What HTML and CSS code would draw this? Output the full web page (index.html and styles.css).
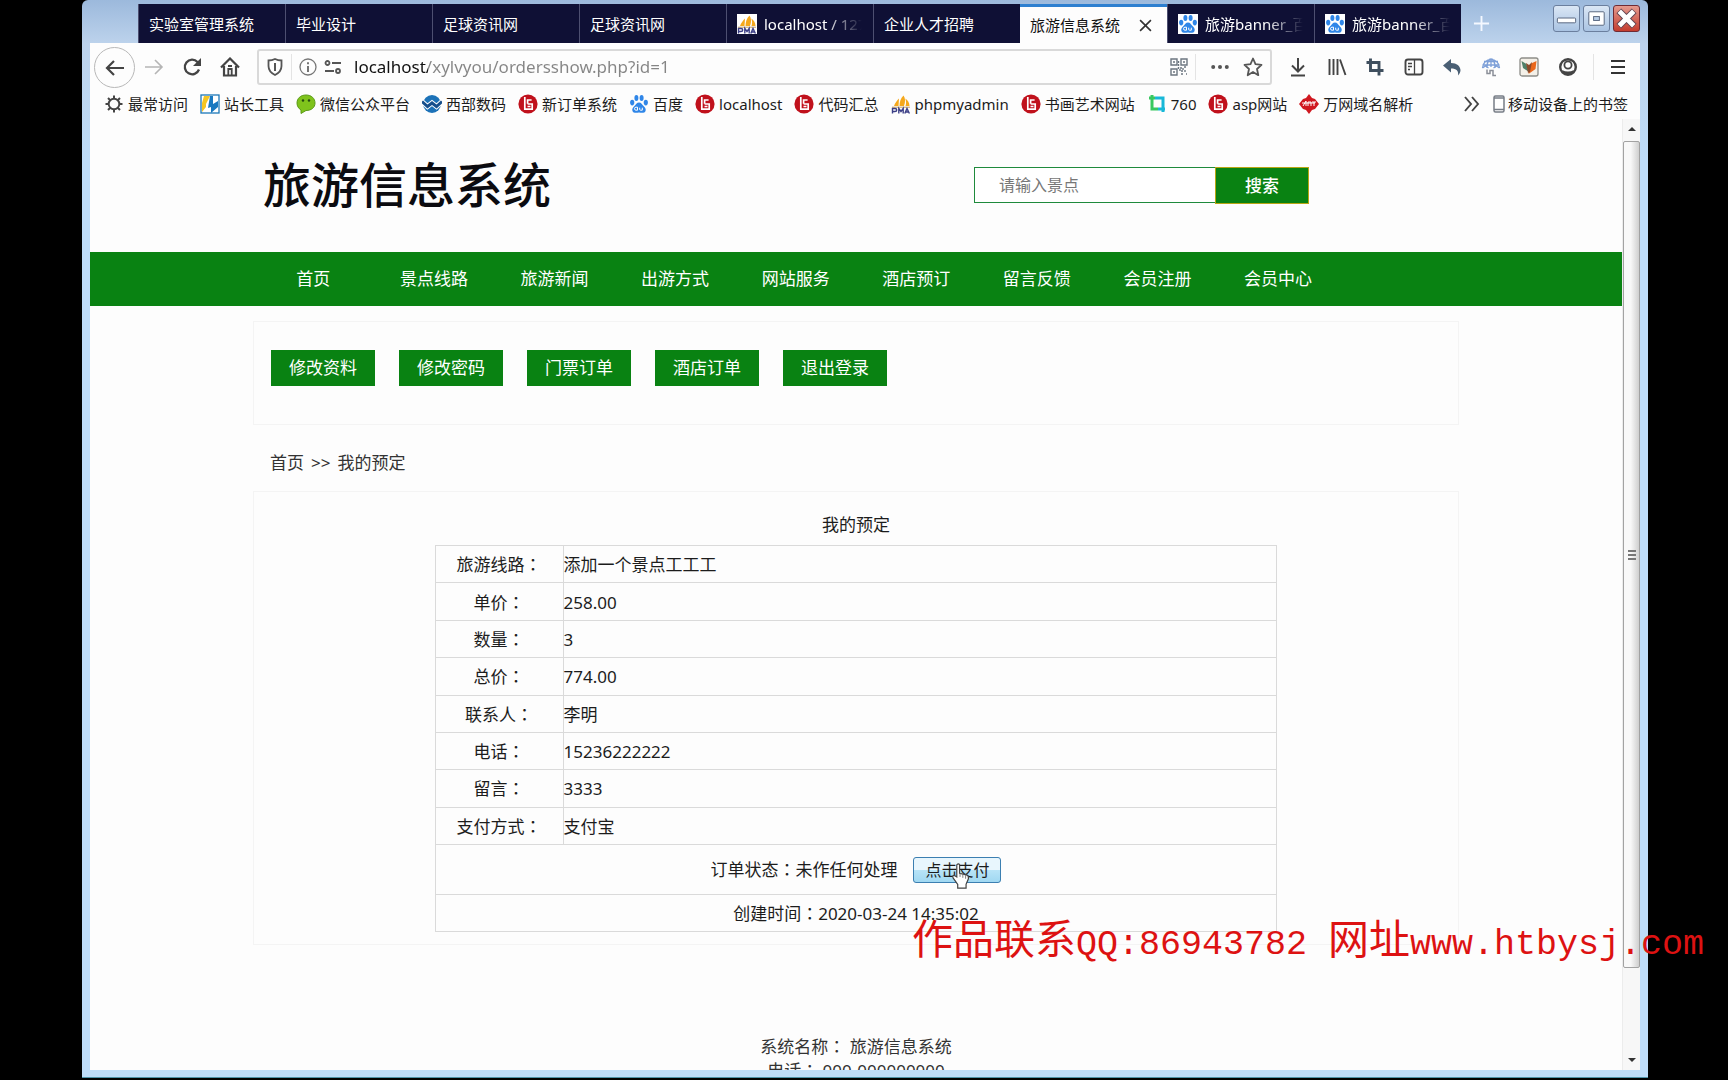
FILE: index.html
```html
<!DOCTYPE html>
<html lang="zh-CN">
<head>
<meta charset="utf-8">
<meta name="viewport" content="width=device-width, initial-scale=1">
<title>旅游信息系统</title>
<link rel="stylesheet" href="styles.css">
</head>
<body>
<svg class="defs" aria-hidden="true">
  <symbol id="paw" viewBox="0 0 20 20"><g fill="#2f86e8"><ellipse cx="3.2" cy="8.6" rx="2.1" ry="2.8"/><ellipse cx="7.4" cy="4" rx="2" ry="2.9"/><ellipse cx="12.6" cy="4" rx="2" ry="2.9"/><ellipse cx="16.8" cy="8.6" rx="2.1" ry="2.8"/><path d="M10 8.4c2.300 0 3.100 2.200 4.800 3.900 1.800 1.800 2.300 3 1.700 4.600-.8 2.100-3 2.200-6.500 1.600-3.500.6-5.700.5-6.500-1.600-.6-1.600-.1-2.800 1.700-4.600C6.900 10.600 7.700 8.400 10 8.400z"/></g><path d="M8.500 13.200H7a1.500 1.500 0 0 0 0 3h1.500zm2.200.5v1.800q0 .7.8.7h1.800v-2.500" fill="none" stroke="#fff" stroke-width="1"/></symbol>
  <symbol id="pma" viewBox="0 0 20 20"><path d="M3 12C4 9 6 6.500 8 4.500L7.500 12zM8.500 12C8.700 8 9.500 4 12.500 1.500 14.500 4 14.500 8 13 12zM14.500 12c.8-2.500.8-5-.2-7.500C17 6 18.500 9 18.500 12z" fill="#f5a81c"/><path d="M1 13.200h18" stroke="#c9a15c"/><path d="M1.500 19.500v-5H4q1.700 0 1.700 1.500T4 17.500H1.500M7.800 19.500v-5l2.200 3 2.200-3v5M13.800 19.500l2.200-5 2.400 5M14.700 18h2.800" fill="none" stroke="#3c3f86" stroke-width="1.400"/></symbol>
  <symbol id="redb" viewBox="0 0 20 20"><circle cx="10" cy="10" r="9.600" fill="#c0111c"/><path d="M6.800 3v12.200h7.400V10H9.600M9.600 9.800V6h4M9.500 12.500h3" fill="none" stroke="#fff" stroke-width="1.700"/></symbol>
</svg>
<div class="window">
  <header class="tabstrip">
    <nav class="tabs" aria-label="标签页">
      <button class="tab"><span>实验室管理系统</span></button>
      <button class="tab"><span>毕业设计</span></button>
      <button class="tab"><span>足球资讯网</span></button>
      <button class="tab"><span>足球资讯网</span></button>
      <button class="tab"><svg class="fav"><use href="#pma"/></svg><span class="fade">localhost / 127</span></button>
      <button class="tab"><span>企业人才招聘</span></button>
      <button class="tab active"><span>旅游信息系统</span><svg class="x" viewBox="0 0 12 12"><path d="M1 1l10 10M11 1L1 11" stroke="#333" stroke-width="1.500"/></svg></button>
      <button class="tab"><svg class="fav"><use href="#paw"/></svg><span class="fade">旅游banner_百度</span></button>
      <button class="tab"><svg class="fav"><use href="#paw"/></svg><span class="fade">旅游banner_百度</span></button>
      <button class="newtab" aria-label="新建标签页"><svg viewBox="0 0 18 18"><path d="M9 1v16M1 9h16" stroke="#f4f8ff" stroke-width="2"/></svg></button>
    </nav>
    <div class="winbtns">
      <button class="wbtn" aria-label="最小化"><svg viewBox="0 0 26 26"><rect x="3.500" y="12.500" width="19" height="5" rx="1" fill="#fff" stroke="#56657e"/></svg></button>
      <button class="wbtn" aria-label="最大化"><svg viewBox="0 0 26 26"><rect x="5" y="6" width="16" height="14" rx="1" fill="#fff" stroke="#56657e"/><rect x="10" y="11" width="6" height="4" fill="#b9cfe8" stroke="#56657e"/></svg></button>
      <button class="wbtn close" aria-label="关闭"><svg viewBox="0 0 26 26"><path d="M5 5l16 16M21 5L5 21" stroke="#5d4350" stroke-width="7"/><path d="M5.500 5.500l15 15M20.500 5.500l-15 15" stroke="#fff" stroke-width="5"/></svg></button>
    </div>
  </header>
  <div class="toolbar">
    <button class="back" aria-label="后退"><svg viewBox="0 0 20 20"><path d="M19 10H2M9 3l-7 7 7 7" fill="none" stroke="#444" stroke-width="2.200"/></svg></button>
    <div class="navicons">
      <button aria-label="前进"><svg viewBox="0 0 20 20"><path d="M1 10h17M11 3l7 7-7 7" fill="none" stroke="#b5b5b5" stroke-width="1.600"/></svg></button>
      <button aria-label="刷新"><svg viewBox="0 0 20 20"><path d="M17 12.500A7.300 7.300 0 1 1 15.500 5l2 2" fill="none" stroke="#444" stroke-width="2.300"/><path d="M19 1v8h-8z" fill="#444"/></svg></button>
      <button aria-label="主页"><svg viewBox="0 0 20 20"><path d="M1 10.500L10 1.500l9 9M4 9v9.500h12V9" fill="none" stroke="#444" stroke-width="2.200"/><path d="M8.300 18v-6h3.400v6M8 9h4" stroke="#444" stroke-width="1.800" fill="none"/></svg></button>
    </div>
    <div class="urlbar">
      <svg class="shield" viewBox="0 0 16 18"><path d="M8 1C6 2 4 2.500 1.500 2.500V8c0 4 2.500 7 6.500 9 4-2 6.500-5 6.500-9V2.500C12 2.500 10 2 8 1z" fill="none" stroke="#555" stroke-width="1.800"/><path d="M8 5v8" stroke="#555" stroke-width="2"/></svg>
      <i class="sep"></i>
      <svg viewBox="0 0 18 18"><circle cx="9" cy="9" r="8" fill="none" stroke="#777" stroke-width="1.300"/><path d="M9 8v6M9 4.300v2" stroke="#666" stroke-width="1.800"/></svg>
      <svg viewBox="0 0 18 18"><g fill="none" stroke="#555" stroke-width="1.800"><circle cx="3.500" cy="5" r="2"/><path d="M8 5h9M1 13h9"/><circle cx="14" cy="13" r="2"/></g></svg>
      <input class="url" type="text" aria-label="网址" value="localhost/xylvyou/ordersshow.php?id=1">
      <svg viewBox="0 0 18 18"><g fill="none" stroke="#6c7680" stroke-width="1.400"><path d="M1 1h6v6H1zM11 1h6v6h-6zM1 11h6v6H1z"/><path d="M3 4h2M13 4h2M3 14h2M10 10h3v3h-3zM14 9h3M15 12v3M11 16h2M16 16h1M8.500 3v8" stroke-dasharray="2 1"/></g></svg>
      <i class="sep"></i>
      <svg class="dots" viewBox="0 0 18 18"><g fill="#555"><circle cx="2.200" cy="9" r="2"/><circle cx="9" cy="9" r="2"/><circle cx="15.800" cy="9" r="2"/></g></svg>
      <svg class="star" viewBox="0 0 20 20"><path d="M10 1.500l2.500 5.700 6 .6-4.500 4.200 1.300 6.200-5.300-3.200-5.300 3.200L6 12 1.500 7.800l6-.6z" fill="none" stroke="#555" stroke-width="1.800" stroke-linejoin="round"/></svg>
    </div>
    <div class="actions">
      <button aria-label="下载"><svg viewBox="0 0 20 20"><path d="M10 1v13M4 8.500l6 6 6-6M3 18.500h14" fill="none" stroke="#444" stroke-width="2"/></svg></button>
      <button aria-label="书签库"><svg viewBox="0 0 20 20"><path d="M2.500 2v16M6.500 2v16M10.500 2v16M13 2.500l5.500 15.500" fill="none" stroke="#444" stroke-width="1.900"/></svg></button>
      <button aria-label="截图"><svg viewBox="0 0 20 20"><path d="M5.500 1.500v12H18.500M1.500 5.500h12.500v13" fill="none" stroke="#3f4f5e" stroke-width="2.900"/></svg></button>
      <button aria-label="侧栏"><svg viewBox="0 0 20 20"><rect x="1.500" y="2.500" width="17" height="15" rx="2.500" fill="none" stroke="#444" stroke-width="1.900"/><path d="M10.500 3v14M4 6.500h4M4 9.500h4M4 12.500h2" stroke="#444" stroke-width="1.300"/></svg></button>
      <button aria-label="撤销"><svg viewBox="0 0 20 20"><path d="M1 8.500L9 2v4c6 0 9 3 9.500 7 0 2-1 4-2.500 5.500.8-4.500-1.500-7-7-7v4z" fill="#4a5f74"/></svg></button>
      <button aria-label="翻译"><svg viewBox="0 0 20 20"><path d="M1.500 11a8.500 8.500 0 0 1 17 0M6 11c0-12 8-12 8 0M1.500 8h17M3 4.500h14M10 2v8M1.500 11l3-2 3 2M12.500 11l3-2 3 2" fill="none" stroke="#7ea0d8" stroke-width="1.300"/><path d="M6 12.500v4h3v-3h3v5h3" fill="none" stroke="#8b8f98" stroke-width="1.500"/></svg></button>
      <button aria-label="扩展"><svg viewBox="0 0 20 20"><rect x="1" y="1" width="18" height="18" rx="2" fill="#f4f0e8" stroke="#8d8d88" stroke-width="1.300"/><path d="M2.500 4l5 3 2 7.500-5.500-3.500z" fill="#4f8068"/><path d="M17.500 4l-5.500 2.500L9.500 17l7-5z" fill="#ea681c"/><path d="M7 6l3 2 3-3-2 10-2 1z" fill="#8c4a2a"/></svg></button>
      <button aria-label="账户"><svg viewBox="0 0 20 20"><circle cx="10" cy="10" r="7.800" fill="none" stroke="#444" stroke-width="2.400"/><circle cx="10" cy="8" r="3.600" fill="none" stroke="#444" stroke-width="1.800"/><path d="M4 13q6 3 12 0l-2 4H6z" fill="#444"/></svg></button>
    </div>
    <i class="sep"></i>
    <button class="menu" aria-label="菜单"><svg viewBox="0 0 20 20"><path d="M3 4h14M3 10h14M3 16h14" stroke="#333" stroke-width="2"/></svg></button>
  </div>
  <nav class="bookmarks" aria-label="书签">
    <a href="#"><svg viewBox="0 0 20 20"><circle cx="10" cy="10" r="5.300" fill="none" stroke="#444" stroke-width="1.900"/><path d="M10 1.500v3M10 15.500v3M1.500 10h3M15.500 10h3M4 4l2 2M14 14l2 2M16 4l-2 2M4 16l2-2" stroke="#444" stroke-width="2"/></svg>最常访问</a>
    <a href="#"><svg viewBox="0 0 20 20"><rect x="1" y="1" width="18" height="18" fill="#fff" stroke="#1c78b8" stroke-width="1.300"/><path d="M4 2h6L6 10v3l-4 5V9z" fill="#f4c522"/><path d="M10 2h3v8l5-3v6l-7 6V13l-3 1z" fill="#1878c0"/></svg>站长工具</a>
    <a href="#"><svg viewBox="0 0 20 20"><path d="M10 1c5.500 0 9 3.500 9 8s-3.500 7.500-9 7.500L5 19.500V16C2.500 14.500 1 12 1 9c0-4.500 3.500-8 9-8z" fill="#7fc31c" stroke="#5a9a18"/><circle cx="7" cy="6.500" r="1.200" fill="#244a10"/><circle cx="13" cy="6.500" r="1.200" fill="#244a10"/></svg>微信公众平台</a>
    <a href="#"><svg viewBox="0 0 20 20"><circle cx="10" cy="10" r="9" fill="#1c72b8"/><path d="M0 7.500l5.500 5 4.500-3.500 4.500 3.500 5.500-5" fill="none" stroke="#fff" stroke-width="5"/><path d="M0 7.500l5.500 5 4.500-3.500 4.500 3.500 5.500-5" fill="none" stroke="#164f8c" stroke-width="3"/></svg>西部数码</a>
    <a href="#"><svg><use href="#redb"/></svg>新订单系统</a>
    <a href="#"><svg><use href="#paw"/></svg>百度</a>
    <a href="#"><svg><use href="#redb"/></svg>localhost</a>
    <a href="#"><svg><use href="#redb"/></svg>代码汇总</a>
    <a href="#"><svg><use href="#pma"/></svg>phpmyadmin</a>
    <a href="#"><svg><use href="#redb"/></svg>书画艺术网站</a>
    <a href="#"><svg viewBox="0 0 20 20"><path d="M5 1v14h6M2 4h6" fill="none" stroke="#38c860" stroke-width="3"/><path d="M8 4h8v14M11 15h7" fill="none" stroke="#18b8d8" stroke-width="3"/></svg>760</a>
    <a href="#"><svg><use href="#redb"/></svg>asp网站</a>
    <a href="#"><svg viewBox="0 0 20 20"><path d="M10 0l3 4 3 1 4 5-4 5-3 1-3 4-3-4-3-1-4-5 4-5 3-1z" fill="#d01820"/><path d="M4 12l3-5v5M9 12V8h3v4M13 8h4M15 8v4M3 9h13" fill="none" stroke="#fff" stroke-width="1"/></svg>万网域名解析</a>
    <button class="more" aria-label="更多书签"><svg viewBox="0 0 18 18"><path d="M2 2l6 7-6 7M9 2l6 7-6 7" fill="none" stroke="#444" stroke-width="1.900"/></svg></button>
    <a class="mobile" href="#"><svg viewBox="0 0 12 18"><rect x="1" y="1" width="10" height="16" rx="1.500" fill="#fff" stroke="#777d86" stroke-width="1.500"/><path d="M1 3h10M1 14.500h10" stroke="#777d86" stroke-width="1.500"/></svg>移动设备上的书签</a>
  </nav>
  <div class="viewport">
    <main class="page">
      <div class="masthead wrap">
        <h1>旅游信息系统</h1>
        <form class="search">
          <input type="text" aria-label="景点" placeholder="请输入景点">
          <button type="button">搜索</button>
        </form>
      </div>
      <nav class="mainnav">
        <div class="wrap">
          <a href="#">首页</a><a href="#">景点线路</a><a href="#">旅游新闻</a><a href="#">出游方式</a><a href="#">网站服务</a><a href="#">酒店预订</a><a href="#">留言反馈</a><a href="#">会员注册</a><a href="#">会员中心</a>
        </div>
      </nav>
      <div class="member wrap panel">
        <a href="#">修改资料</a><a href="#">修改密码</a><a href="#">门票订单</a><a href="#">酒店订单</a><a href="#">退出登录</a>
      </div>
      <div class="crumbs wrap"><a href="#">首页</a><span>&gt;&gt;</span><span>我的预定</span></div>
      <section class="order wrap panel">
        <h2>我的预定</h2>
        <table>
          <tbody>
            <tr><th scope="row">旅游线路<span class="colon" lang="zh-TW">：</span></th><td>添加一个景点工工工</td></tr>
            <tr><th scope="row">单价<span class="colon" lang="zh-TW">：</span></th><td>258.00</td></tr>
            <tr><th scope="row">数量<span class="colon" lang="zh-TW">：</span></th><td>3</td></tr>
            <tr><th scope="row">总价<span class="colon" lang="zh-TW">：</span></th><td>774.00</td></tr>
            <tr><th scope="row">联系人<span class="colon" lang="zh-TW">：</span></th><td>李明</td></tr>
            <tr><th scope="row">电话<span class="colon" lang="zh-TW">：</span></th><td>15236222222</td></tr>
            <tr><th scope="row">留言<span class="colon" lang="zh-TW">：</span></th><td>3333</td></tr>
            <tr><th scope="row">支付方式<span class="colon" lang="zh-TW">：</span></th><td>支付宝</td></tr>
            <tr class="status"><td colspan="2"><div class="statusline"><span>订单状态<span class="colon" lang="zh-TW">：</span>未作任何处理</span>
              <span class="pay"><button>点击支付</button><svg class="cursor" viewBox="0 0 20 28"><path d="M6 2q2-2 3 0v9l8 2q2 1 1.500 4L16 23v4H7v-4L2 16q-1-3 1.500-2.500L6 15z" fill="#fff" stroke="#444" stroke-width="1.300"/><path d="M9.500 11v4M12.500 12v4M15.500 13v4" stroke="#777"/></svg></span></div></td></tr>
            <tr><td class="center" colspan="2">创建时间<span class="colon" lang="zh-TW">：</span>2020-03-24 14:35:02</td></tr>
          </tbody>
        </table>
      </section>
      <footer class="foot">
        <p>系统名称<span class="colon" lang="zh-TW">：</span> 旅游信息系统</p>
        <p>电话<span class="colon" lang="zh-TW">：</span> 000-000000000</p>
      </footer>
    </main>
    <div class="scrollbar" aria-hidden="true">
      <i class="up"></i>
      <div class="track"><div class="thumb"><i></i><i></i><i></i></div></div>
      <i class="down"></i>
    </div>
  </div>
</div>
<div class="watermark">作品联系<span>QQ:86943782 </span>网址<span>www.htbysj.com</span></div>
</body>
</html>
```

FILE: styles.css
```css
* { box-sizing: border-box; }

body {
  margin: 0;
  height: 100vh;
  overflow: hidden;
  display: flex;
  padding: 0 80px 2px 82px;
  background: #000;
  color: #1c1c1c;
  font: 17px/24px "Noto Sans", "Noto Sans CJK SC", sans-serif;
}

a { color: inherit; text-decoration: none; }
button { padding: 0; border: 0; background: none; color: inherit; font: inherit; }
svg { display: block; flex: none; }
.defs { position: absolute; width: 0; height: 0; }

/* full-width colon centred in its cell */
.colon { font-family: "Noto Sans CJK TC", sans-serif; line-height: 1; }

/* browser window */
.window {
  flex: 1;
  min-width: 0;
  display: flex;
  flex-direction: column;
  padding: 4px 8px 7px;
  background: linear-gradient(#9cb9dc, #bdd3ec 44px, #bedcf8 160px);
  border-bottom: 1px solid #4e93a8;
  border-radius: 6px 6px 0 0;
}

.tabstrip { display: flex; justify-content: space-between; height: 39px; padding-left: 48px; }
.tabs { display: flex; flex: 1; min-width: 0; }
.tab {
  display: flex;
  align-items: center;
  gap: 7px;
  flex: 0 1 147px;
  min-width: 0;
  padding: 0 11px 0 10px;
  overflow: hidden;
  background: #0f1035;
  border-left: 1px solid #4d4f70;
  color: #fff;
  font-size: 15px;
  white-space: nowrap;
}
.tab.active { justify-content: space-between; background: #fdfdfd; border-left: 0; border-top: 3px solid #2d7fd0; color: #111; }
.tab .fade { flex: 1; overflow: hidden; text-align: left; mask-image: linear-gradient(90deg, #000 62%, transparent); }
.fav { width: 20px; height: 20px; background: #fff; }
.x { width: 13px; height: 13px; margin-right: 4px; }
.newtab { padding: 0 12px; }
.newtab svg { width: 17px; height: 17px; }

.winbtns { display: flex; gap: 3px; padding-top: 1px; }
.wbtn { width: 27px; height: 27px; border: 1px solid #6b7f9e; border-radius: 3px; background: linear-gradient(#dbe7f5, #a9c3e2); }
.wbtn svg { width: 25px; height: 25px; }
.wbtn.close { background: linear-gradient(#e59a8e, #c43c2e); border-color: #6f2b34; }

.toolbar { display: flex; align-items: center; height: 48px; padding: 0 12px 0 4px; background: #fdfdfd; }
.toolbar svg { width: 20px; height: 20px; }
.back { width: 41px; height: 41px; padding: 10px; border: 1px solid #b8b8b8; border-radius: 50%; }
.navicons { display: flex; gap: 18px; padding: 0 17px 0 9px; }
.sep { width: 1px; height: 26px; background: #e4e4e4; }
.urlbar {
  flex: 1;
  min-width: 0;
  display: flex;
  align-items: center;
  gap: 7px;
  height: 36px;
  padding: 0 7px;
  border: 2px solid #d9d9d9;
  border-radius: 3px;
}
.urlbar svg { width: 18px; height: 18px; }
.urlbar .dots { margin: 0 7px 0 8px; }
.urlbar .star { width: 20px; height: 20px; }
.url {
  flex: 1;
  min-width: 0;
  padding: 0 0 0 5px;
  border: 0;
  outline: 0;
  color: #858585;
  font: inherit;
  background: linear-gradient(90deg, #111 79px, #858585 79px);
  background-clip: text;
  -webkit-background-clip: text;
  -webkit-text-fill-color: transparent;
}
.actions { display: flex; justify-content: space-between; width: 290px; margin: 0 15px 0 16px; }
.menu { margin-left: 14px; }

.bookmarks {
  display: flex;
  align-items: center;
  gap: 12px;
  height: 28px;
  padding: 0 12px 2px 14px;
  background: #fdfdfd;
  font-size: 15px;
  line-height: 20px;
  white-space: nowrap;
}
.bookmarks a { display: flex; align-items: center; gap: 4px; }
.bookmarks svg { width: 20px; height: 20px; }
.bookmarks .more { margin-left: auto; }
.bookmarks .more svg { width: 18px; height: 18px; }
.bookmarks .mobile { gap: 3px; }
.bookmarks .mobile svg { width: 12px; height: 18px; }

/* web page */
.viewport { flex: 1; min-height: 0; display: flex; background: #fdfdfd; }
.page { flex: 1; min-width: 0; overflow: hidden; }
.wrap { width: 1206px; max-width: 100%; margin-left: auto; margin-right: auto; }
.panel { border: 1px solid #f4f4f4; }

.masthead { display: flex; justify-content: space-between; align-items: center; height: 133px; padding: 0 150px 0 10px; }
h1 { margin: 0; padding-bottom: 8px; font-size: 48px; line-height: 56px; font-weight: 500; color: #0b0b10; font-family: "Noto Sans CJK SC", sans-serif; }
.search { display: flex; align-items: flex-start; }
.search input {
  width: 241px;
  height: 36px;
  padding: 0 24px;
  border: 1px solid #1f8a3c;
  border-right: 0;
  background: #fff;
  font: inherit;
  font-size: 16px;
}
.search input::placeholder { color: #777; }
.search button { width: 94px; height: 37px; border: 1px solid #b8a614; background: #098212; color: #fff; font-weight: 500; }

.mainnav { background: #098212; color: #fff; }
.mainnav .wrap { display: flex; }
.mainnav a { width: 10%; line-height: 54px; text-align: center; }

.member { display: flex; gap: 24px; height: 104px; margin-top: 15px; padding: 28px 17px; }
.member a { width: 104px; height: 36px; line-height: 36px; text-align: center; background: #098212; color: #fff; }

.crumbs { display: flex; gap: 7px; padding: 26px 17px 16px; color: #333; }

.order { padding: 21px 0 12px; }
h2 { margin: 0 0 8px; font-size: 17px; line-height: 24px; font-weight: 400; text-align: center; }
table { width: 70%; height: 387px; margin: 0 auto; border-collapse: collapse; }
th, td { height: 37px; padding: 2px 0 0; border: 1px solid #dadada; font-weight: 400; text-align: left; }
th { width: 128px; text-align: center; }
.center { text-align: center; }
.status td { height: 49px; }
.statusline { display: flex; align-items: center; justify-content: center; gap: 16px; }
.pay { position: relative; display: flex; }
.pay button { width: 88px; height: 26px; border: 1px solid #3c7fb1; border-radius: 3px; background: linear-gradient(#e8f6fd 50%, #b8e4f8 50%, #a0d8f2); font-size: 16px; line-height: 22px; }
.cursor { position: absolute; left: 38px; top: 6px; width: 19px; height: 26px; }

.foot { padding-top: 90px; text-align: center; color: #333; }
.foot p { margin: 0; }

.scrollbar { display: flex; flex-direction: column; width: 18px; padding: 8px 0; background: #f7f7f7; border-left: 1px solid #ececec; }
.up, .down { align-self: center; border: 4px solid transparent; }
.up { border-top: 0; border-bottom-color: #333; }
.down { border-bottom: 0; border-top-color: #333; }
.track { flex: 1; padding: 10px 0 8px; }
.thumb {
  display: flex;
  flex-direction: column;
  align-items: center;
  justify-content: center;
  gap: 2px;
  height: 91%;
  border: 1px solid #a2a2a2;
  border-radius: 2px;
  background: linear-gradient(90deg, #f8f8f8 45%, #cfcfcf);
}
.thumb i { width: 8px; height: 2px; background: #777; }

.watermark {
  position: absolute;
  left: 912px;
  top: 908px;
  color: #dd1212;
  font: 41px/56px "Noto Sans CJK SC", sans-serif;
  white-space: pre;
}
.watermark span { font-family: "Liberation Mono", monospace; font-size: 35px; }
```
